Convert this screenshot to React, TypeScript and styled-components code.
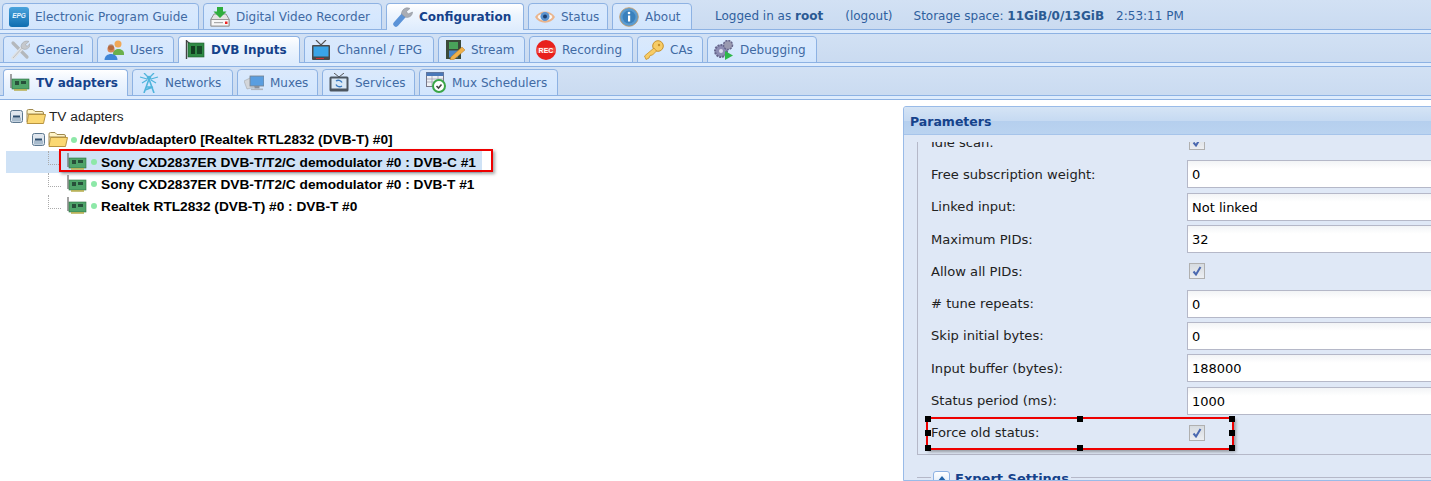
import React from 'react';
import styled, { createGlobalStyle } from 'styled-components';

const GlobalStyle = createGlobalStyle`
  html, body { margin: 0; padding: 0; background: #fff; }
  body { width: 1431px; height: 481px; overflow: hidden; font-family: "DejaVu Sans", sans-serif; }
`;

// Icons
const EpgIcon = () => (
  <svg width="20" height="20" viewBox="0 0 20 20">
    <defs><linearGradient id="epg" x1="0" y1="0" x2="0" y2="1"><stop offset="0" stopColor="#4aa3dc" /><stop offset="1" stopColor="#0f6db0" /></linearGradient></defs>
    <rect width="20" height="20" rx="3" fill="url(#epg)" />
    <text x="10" y="11" textAnchor="middle" fontSize="6.5" fontWeight="700" fontStyle="italic" fill="#e8f4ff" fontFamily="Liberation Sans">EPG</text>
  </svg>
);
const DvrIcon = () => (
  <svg width="20" height="20" viewBox="0 0 20 20">
    <path d="M1 12 L4 7 H16 L19 12 V19 H1 Z" fill="#e4e4e4" stroke="#8d8d8d" />
    <rect x="1" y="12.5" width="18" height="6.5" fill="#f7f7f7" stroke="#9a9a9a" />
    <rect x="4" y="15" width="9" height="1.2" fill="#aaa" />
    <rect x="15" y="14.5" width="2.5" height="2.5" fill="#e22" />
    <path d="M7 0 H13 V4.5 H16.5 L10 11 L3.5 4.5 H7 Z" fill="#2fae3d" />
  </svg>
);
const WrenchIcon = () => (
  <svg width="20" height="20" viewBox="0 0 20 20">
    <path d="M3 17 L11 8" stroke="#5b93d8" strokeWidth="5.5" strokeLinecap="round" />
    <path d="M8.5 7 C8.5 2.5 13 -0.5 17 1.5 L13.5 4.5 L15 7 L19.5 5 C19.5 9 15.5 11.5 12 10 Z" fill="#a9adb5" stroke="#858a93" strokeWidth="0.5" />
  </svg>
);
const EyeIcon = () => (
  <svg width="20" height="20" viewBox="0 0 20 20">
    <path d="M0 10 C4 2.5 16 2.5 20 10 C16 17.5 4 17.5 0 10 Z" fill="#eab48c" />
    <path d="M2.5 10 C6 5 14 5 17.5 10 C14 15 6 15 2.5 10 Z" fill="#f8f8f8" />
    <circle cx="10" cy="9.5" r="4.5" fill="#5a93d0" />
    <circle cx="10" cy="9.5" r="2" fill="#1d3f70" />
  </svg>
);
const AboutIcon = () => (
  <svg width="20" height="20" viewBox="0 0 20 20">
    <circle cx="10" cy="10" r="9.3" fill="#5a9bd0" stroke="#c7955a" strokeWidth="0.8" />
    <circle cx="10" cy="10" r="6.5" fill="#3a80bc" />
    <rect x="9" y="8.5" width="2.2" height="6" fill="#fff" />
    <circle cx="10" cy="6" r="1.3" fill="#fff" />
  </svg>
);
const ToolsIcon = () => (
  <svg width="20" height="20" viewBox="0 0 20 20">
    <path d="M3 3 L17 17" stroke="#b4b8bc" strokeWidth="3.2" strokeLinecap="round" />
    <path d="M3 18 L13 7" stroke="#dfe2e5" strokeWidth="3.4" strokeLinecap="round" />
    <path d="M3 18 L13 7" stroke="#a4a8ac" strokeWidth="0.6" />
    <path d="M11 7 C11 2.5 15.5 0 19 1.5 L15.5 4.5 L17 6.5 L20 3.5 C20.5 8 16 10.5 13 9 Z" fill="#c5c8cc" stroke="#989ca0" strokeWidth="0.5" />
  </svg>
);
const UsersIcon = () => (
  <svg width="20" height="20" viewBox="0 0 20 20">
    <circle cx="14" cy="4" r="3.5" fill="#f0a858" />
    <path d="M9 13.5 C9 7.5 20 7.5 20 13.5 V15 H9 Z" fill="#6ab04c" />
    <circle cx="7" cy="9" r="3.6" fill="#d8865a" />
    <circle cx="7" cy="7.2" r="3" fill="#a0582c" opacity="0.6" />
    <path d="M0.5 20 C0.5 12 13.5 12 13.5 20 Z" fill="#3f86d8" />
  </svg>
);
const CardIcon = () => (
  <svg width="20" height="18" viewBox="0 0 20 18">
    <path d="M1 0 V14" stroke="#7a7a7a" strokeWidth="1.4" />
    <rect x="2" y="5" width="17" height="10" fill="#4fa46a" stroke="#2c6e40" strokeWidth="0.6" />
    <rect x="5" y="7" width="4" height="4" fill="#28503a" />
    <rect x="11" y="7" width="5" height="3" fill="#26503a" />
    <rect x="4" y="15" width="13" height="1.8" fill="#b9b25a" />
  </svg>
);
const DvbIcon = () => (
  <svg width="20" height="20" viewBox="0 0 20 20">
    <path d="M1.5 0 V19" stroke="#444" strokeWidth="1.4" />
    <path d="M1.5 1 L5 3.5" stroke="#444" strokeWidth="1.2" />
    <rect x="3" y="3" width="16" height="14" fill="#2f8a45" stroke="#1d5a2c" strokeWidth="0.6" />
    <rect x="6" y="6" width="4" height="8" fill="#123d20" />
    <rect x="12" y="6" width="5" height="8" fill="#164a28" />
  </svg>
);
const TvIcon = () => (
  <svg width="20" height="20" viewBox="0 0 20 20">
    <path d="M5 0 L10 5 L15 0" stroke="#555" fill="none" strokeWidth="1.2" />
    <rect x="1" y="5" width="18" height="15" rx="1" fill="#4a4a4a" />
    <rect x="2.5" y="6.5" width="15" height="10" fill="#3aa5e8" />
    <rect x="5" y="18" width="8" height="1" fill="#c33" />
  </svg>
);
const StreamIcon = () => (
  <svg width="20" height="20" viewBox="0 0 20 20">
    <rect x="1" y="0" width="15" height="19" fill="#3a4a3a" />
    <rect x="4" y="2" width="9" height="7" fill="#49a35a" />
    <rect x="4" y="10.5" width="9" height="7" fill="#4a86c8" />
    <path d="M6 17 L17 7 L20 10 L9 19.5 L5 20 Z" fill="#eeb04a" stroke="#b87a20" strokeWidth="0.5" />
  </svg>
);
const RecIcon = () => (
  <svg width="20" height="20" viewBox="0 0 20 20">
    <circle cx="10" cy="10" r="10" fill="#e8201c" />
    <rect y="7.5" width="20" height="5.5" fill="#f36a60" opacity="0.55" />
    <text x="10" y="12.5" textAnchor="middle" fontSize="7" fontWeight="700" fill="#fff" fontFamily="Liberation Sans">REC</text>
  </svg>
);
const KeyIcon = () => (
  <svg width="20" height="20" viewBox="0 0 20 20">
    <circle cx="14" cy="6" r="5.3" fill="#f7cc66" stroke="#c8902a" />
    <path d="M10 8 L0.5 16 L2 19.5 L5 18 L6 15.5 L8.5 15 L12.5 11 Z" fill="#f7cc66" stroke="#c8902a" strokeWidth="0.8" />
    <circle cx="15" cy="5" r="1.2" fill="#c8902a" />
  </svg>
);
const GearsIcon = () => (
  <svg width="20" height="20" viewBox="0 0 20 20">
    <circle cx="7" cy="11" r="6" fill="#8d8db4" stroke="#66668c" strokeWidth="2" strokeDasharray="2 1" />
    <circle cx="7" cy="11" r="2" fill="#dde" />
    <circle cx="14" cy="5" r="4.5" fill="#9a9ab0" stroke="#66668c" strokeWidth="1.5" strokeDasharray="2 1" />
    <path d="M11 11 L19 15.5 L11 20 Z" fill="#2fb84a" />
  </svg>
);
const TowerIcon = () => (
  <svg width="20" height="20" viewBox="0 0 20 20" fill="none" stroke="#4fb4dc">
    <path d="M10 6 L5 20 M10 6 L15 20 M7 14 H13 M6 17 L14 14" strokeWidth="1.6" />
    <circle cx="10" cy="5" r="1.8" fill="#4fb4dc" />
    <path d="M5 0 L10 5 L15 0 M1 4 L8 6 M19 4 L12 6 M3 10 L8 7 M17 10 L12 7" strokeWidth="1.3" />
  </svg>
);
const MuxIcon = () => (
  <svg width="20" height="20" viewBox="0 0 20 20">
    <path d="M0 8 L8 4 L11 14 L3 16 Z" fill="#d3d6da" stroke="#a5a8ac" strokeWidth="0.6" />
    <rect x="6" y="3" width="14" height="10" fill="#5a9ee0" stroke="#7a8088" strokeWidth="0.8" />
    <rect x="10.5" y="13" width="5" height="2.5" fill="#8a909a" />
    <rect x="7" y="15.5" width="12" height="1.6" fill="#b0b5be" />
  </svg>
);
const ServicesIcon = () => (
  <svg width="20" height="20" viewBox="0 0 20 20">
    <path d="M5 0 L10 4 L15 0" stroke="#555" fill="none" />
    <rect x="0.5" y="3.5" width="19" height="15" rx="1.5" fill="#4c5660" />
    <rect x="2.5" y="5.5" width="15" height="10" fill="#d9e8f5" />
    <path d="M7 8 A4 4 0 0 1 13 9.5 M13 13 A4 4 0 0 1 7 11.5" stroke="#3a7ac0" strokeWidth="1.4" fill="none" />
  </svg>
);
const SchedIcon = () => (
  <svg width="20" height="21" viewBox="0 0 20 21">
    <rect x="0.5" y="0.5" width="17" height="14" fill="#eef0f4" stroke="#778" />
    <rect x="0.5" y="0.5" width="17" height="3.5" fill="#4a78b8" />
    <path d="M1 7 H17 M1 10 H17 M6 4 V14 M12 4 V14" stroke="#99a" strokeWidth="0.7" />
    <circle cx="13" cy="14" r="6" fill="#fff" stroke="#3aa648" strokeWidth="2" />
    <path d="M10.5 14 L12.5 16 L15.5 12.5" stroke="#444" strokeWidth="1.6" fill="none" />
  </svg>
);
const FolderIcon = () => (
  <svg width="20" height="17" viewBox="0 0 20 17">
    <path d="M1 14 V3 Q1 1.5 2.5 1.5 H7 L9 3.5 H16 Q17.5 3.5 17.5 5 V6 H1" fill="#fff4c8" stroke="#a08a50" />
    <path d="M1 15.5 L2.5 6.5 H19.5 L17.5 15.5 Z" fill="#fbd873" stroke="#b89440" />
  </svg>
);
const MinusBox = () => (
  <svg width="13" height="13" viewBox="0 0 13 13">
    <rect x="0.5" y="0.5" width="12" height="12" rx="2" fill="#dfe6ee" stroke="#5d7890" />
    <rect x="2" y="7.5" width="9" height="4" fill="#a9bccd" />
    <rect x="3" y="5.5" width="7" height="2" fill="#2f4f6f" />
  </svg>
);
const CheckMark = () => (
  <svg width="10" height="10" viewBox="0 0 10 10">
    <path d="M1.5 5.5 L4 8.5 L8.5 1" stroke="#4a68b0" strokeWidth="2" fill="none" />
  </svg>
);
const UpArrow = () => (
  <svg width="10" height="7" viewBox="0 0 10 7"><path d="M5 0 L10 6 H0 Z" fill="#2464a8" /></svg>
);

// Tab bars
const Bar = styled.div`
  height: 33px;
  box-sizing: border-box;
  background: linear-gradient(#d2e1f4 0%, #c9daf0 100%);
  position: relative;
`;
const BarTabs = styled.div<{ $first?: boolean; $left: number }>`
  display: flex;
  gap: 4px;
  align-items: flex-end;
  height: 30px;
  box-sizing: border-box;
  padding-left: ${({ $left }) => $left}px;
  border-top: ${({ $first }) => ($first ? '0' : '1px solid #8db2e3')};
  border-bottom: 1px solid #8db2e3;
`;
const BarStrip = styled.div`
  height: 3px;
  background: #deecfd;
`;
const Tab = styled.div<{ $w: number; $active?: boolean }>`
  width: ${({ $w }) => $w}px;
  height: 27px;
  flex: none;
  box-sizing: border-box;
  display: flex;
  align-items: center;
  gap: 6px;
  padding-left: 6px;
  border: 1px solid #8db2e3;
  border-bottom: ${({ $active }) => ($active ? '0' : '1px solid #8db2e3')};
  border-radius: 4px 4px 0 0;
  margin-bottom: -1px;
  background: ${({ $active }) =>
    $active ? 'linear-gradient(#ffffff 0%, #eef5fe 40%, #deecfd 100%)' : 'linear-gradient(#dbe9fb 0%, #d6e8fe 50%, #d2e5fc 100%)'};
  color: ${({ $active }) => ($active ? '#15428b' : '#416aa3')};
  font-weight: ${({ $active }) => ($active ? 700 : 400)};
  font-size: 12px;
  white-space: nowrap;
  position: relative;
  z-index: ${({ $active }) => ($active ? 1 : 0)};
`;
const StatusArea = styled.div`
  display: flex;
  align-items: center;
  height: 27px;
  margin-left: 19px;
  font-size: 12px;
  color: #2f5f9e;
  white-space: nowrap;
`;
const StatusItem = styled.span<{ $gap: number }>`
  margin-right: ${({ $gap }) => $gap}px;
  b { color: #2b5a93; }
`;
const EndLine = styled.div`
  height: 1px;
  background: #8db2e3;
`;

// Main area
const Main = styled.div`
  display: flex;
  height: 381px;
  overflow: hidden;
`;
const TreePane = styled.div`
  width: 903px;
  flex: none;
  padding-top: 5px;
  box-sizing: border-box;
  font-family: "Liberation Sans", Arial, sans-serif;
  color: #111;
`;
const TreeRow = styled.div<{ $indent: number; $selected?: boolean; $height: number; $gap: number }>`
  display: flex;
  align-items: center;
  gap: ${({ $gap }) => $gap}px;
  height: ${({ $height }) => $height}px;
  margin-left: 6px;
  width: 476px;
  box-sizing: border-box;
  padding-left: ${({ $indent }) => $indent}px;
  background: ${({ $selected }) => ($selected ? '#cfe2f6' : 'transparent')};
  white-space: nowrap;
  position: relative;
`;
const Dot = styled.span`
  width: 6px;
  height: 6px;
  border-radius: 50%;
  background: #8de8a8;
  flex: none;
`;
const RowLabel = styled.span<{ $bold?: boolean }>`
  font-weight: ${({ $bold }) => ($bold ? 700 : 400)};
  font-size: 13.7px;
  color: ${({ $bold }) => ($bold ? '#000' : '#222')};
`;
const Connector = styled.span`
  position: absolute;
  left: 42px;
  top: 0;
  bottom: 8px;
  width: 12px;
  border-left: 1px dotted #aaa;
  border-bottom: 1px dotted #aaa;
`;
const RedFrame = styled.div`
  position: absolute;
  left: 53px;
  top: -2px;
  width: 434px;
  height: 23px;
  box-sizing: border-box;
  border: 2px solid #ee0000;
  box-shadow: 2px 2px 3px rgba(60, 60, 60, 0.45);
  pointer-events: none;
`;

// Parameters panel
const Panel = styled.div`
  width: 600px;
  flex: none;
  margin-top: 6px;
  border: 1px solid #99bbe8;
  border-radius: 3px 0 0 0;
  background: #dfe8f6;
  overflow: hidden;
`;
const PanelHeader = styled.div`
  height: 28px;
  box-sizing: border-box;
  padding: 7px 0 0 6px;
  background: linear-gradient(#d5e4f5 0%, #c6daf2 50%, #b5cfee 52%, #bad3f0 100%);
  border-bottom: 1px solid #a6c4ea;
  color: #15428b;
  font-weight: 700;
  font-size: 12.5px;
  line-height: 16px;
`;
const PanelBody = styled.div`
  margin-top: 7px;
  padding-left: 13px;
  height: 400px;
  overflow: hidden;
`;
const FieldGroup = styled.div`
  margin-top: -16px;
  width: 560px;
  box-sizing: border-box;
  border: 1px solid #b5b8c8;
  border-top: 0;
  padding: 0 0 5px 13px;
`;
const FormRow = styled.div`
  height: 32.3px;
  display: flex;
  align-items: center;
  font-size: 13.1px;
  color: #222;
  position: relative;
`;
const FieldLabel = styled.label`
  width: 256px;
  flex: none;
`;
const Input = styled.div`
  width: 290px;
  height: 28px;
  box-sizing: border-box;
  border: 1px solid #b5b8c8;
  background: linear-gradient(#f2f4f6 0%, #ffffff 30%);
  padding: 6px 0 0 4px;
  line-height: 16px;
  color: #000;
  font-size: 13px;
`;
const Check = styled.span`
  width: 16px;
  height: 16px;
  box-sizing: border-box;
  margin-left: 2px;
  border: 1px solid #b0b0b0;
  background: linear-gradient(#d6dbe0, #eceef2);
  display: flex;
  align-items: center;
  justify-content: center;
`;
const SelectFrame = styled.div`
  position: absolute;
  left: -5px;
  top: 0;
  width: 308px;
  height: 33px;
  box-sizing: border-box;
  border: 2px solid #ee0000;
  box-shadow: 2px 2px 3px rgba(60, 60, 60, 0.45);
  pointer-events: none;
`;
const Handle = styled.i<{ $x: string; $y: string }>`
  position: absolute;
  width: 6px;
  height: 6px;
  background: #000;
  left: calc(${({ $x }) => $x} - 3px);
  top: calc(${({ $y }) => $y} - 3px);
`;
const CollapsedGroup = styled.div`
  margin-top: 22px;
  width: 560px;
  border-top: 1px solid #b5b8c8;
  position: relative;
  height: 20px;
`;
const GroupLegend = styled.div`
  position: absolute;
  left: 14px;
  top: -7px;
  padding: 0 2px;
  display: flex;
  align-items: flex-start;
  gap: 5px;
  background: #dfe8f6;
  color: #15428b;
  font-size: 13px;
  font-weight: 700;
  line-height: 16px;
`;
const ToggleButton = styled.span`
  width: 17px;
  height: 17px;
  box-sizing: border-box;
  border: 1px solid #8db2e3;
  border-radius: 3px;
  background: linear-gradient(#ffffff, #d5e5f8);
  display: flex;
  align-items: center;
  justify-content: center;
`;
const Cursor = styled.svg`
  position: absolute;
  left: 0;
  top: 0;
`;

const topTabs = [
  { label: 'Electronic Program Guide', w: 197, icon: <EpgIcon /> },
  { label: 'Digital Video Recorder', w: 179, icon: <DvrIcon /> },
  { label: 'Configuration', w: 138, icon: <WrenchIcon />, active: true },
  { label: 'Status', w: 80, icon: <EyeIcon /> },
  { label: 'About', w: 80, icon: <AboutIcon /> },
];
const midTabs = [
  { label: 'General', w: 90, icon: <ToolsIcon /> },
  { label: 'Users', w: 77, icon: <UsersIcon /> },
  { label: 'DVB Inputs', w: 122, icon: <DvbIcon />, active: true },
  { label: 'Channel / EPG', w: 130, icon: <TvIcon /> },
  { label: 'Stream', w: 87, icon: <StreamIcon /> },
  { label: 'Recording', w: 104, icon: <RecIcon /> },
  { label: 'CAs', w: 66, icon: <KeyIcon /> },
  { label: 'Debugging', w: 110, icon: <GearsIcon /> },
];
const subTabs = [
  { label: 'TV adapters', w: 125, icon: <CardIcon />, active: true },
  { label: 'Networks', w: 101, icon: <TowerIcon /> },
  { label: 'Muxes', w: 81, icon: <MuxIcon /> },
  { label: 'Services', w: 93, icon: <ServicesIcon /> },
  { label: 'Mux Schedulers', w: 139, icon: <SchedIcon /> },
];
const fields: { label: string; value?: string; checked?: boolean }[] = [
  { label: 'Idle scan:', checked: true },
  { label: 'Free subscription weight:', value: '0' },
  { label: 'Linked input:', value: 'Not linked' },
  { label: 'Maximum PIDs:', value: '32' },
  { label: 'Allow all PIDs:', checked: true },
  { label: '# tune repeats:', value: '0' },
  { label: 'Skip initial bytes:', value: '0' },
  { label: 'Input buffer (bytes):', value: '188000' },
  { label: 'Status period (ms):', value: '1000' },
  { label: 'Force old status:', checked: true },
];
const handles = [
  ['0%', '0%'], ['50%', '0%'], ['100%', '0%'],
  ['0%', '50%'], ['100%', '50%'],
  ['0%', '100%'], ['50%', '100%'], ['100%', '100%'],
];

const TabList = ({ tabs }: { tabs: typeof midTabs }) => (
  <>
    {tabs.map((t) => (
      <Tab key={t.label} $w={t.w} $active={t.active}>
        {t.icon}
        {t.label}
      </Tab>
    ))}
  </>
);

export default function App() {
  return (
    <>
      <GlobalStyle />
      <Cursor width="6" height="6" viewBox="0 0 6 6"><path d="M0 0 L5 5" stroke="#333" strokeWidth="1.5" /></Cursor>
      <Bar>
        <BarTabs $first $left={2}>
          <TabList tabs={topTabs} />
          <StatusArea>
            <StatusItem $gap={22}>Logged in as <b>root</b></StatusItem>
            <StatusItem $gap={21}>(logout)</StatusItem>
            <StatusItem $gap={12}>Storage space: <b>11GiB/0/13GiB</b></StatusItem>
            <StatusItem $gap={0}>2:53:11 PM</StatusItem>
          </StatusArea>
        </BarTabs>
        <BarStrip />
      </Bar>
      <Bar>
        <BarTabs $left={3}><TabList tabs={midTabs} /></BarTabs>
        <BarStrip />
      </Bar>
      <Bar>
        <BarTabs $left={3}><TabList tabs={subTabs} /></BarTabs>
        <BarStrip />
      </Bar>
      <EndLine />
      <Main>
        <TreePane>
          <TreeRow $indent={4} $height={23} $gap={3}>
            <MinusBox /><FolderIcon /><RowLabel>TV adapters</RowLabel>
          </TreeRow>
          <TreeRow $indent={26} $height={23} $gap={3}>
            <MinusBox /><FolderIcon /><Dot /><RowLabel $bold>/dev/dvb/adapter0 [Realtek RTL2832 (DVB-T) #0]</RowLabel>
          </TreeRow>
          <TreeRow $indent={61} $height={22} $gap={4} $selected>
            <Connector />
            <CardIcon /><Dot /><RowLabel $bold>Sony CXD2837ER DVB-T/T2/C demodulator #0 : DVB-C #1</RowLabel>
            <RedFrame />
          </TreeRow>
          <TreeRow $indent={61} $height={22} $gap={4}>
            <Connector />
            <CardIcon /><Dot /><RowLabel $bold>Sony CXD2837ER DVB-T/T2/C demodulator #0 : DVB-T #1</RowLabel>
          </TreeRow>
          <TreeRow $indent={61} $height={22} $gap={4}>
            <Connector />
            <CardIcon /><Dot /><RowLabel $bold>Realtek RTL2832 (DVB-T) #0 : DVB-T #0</RowLabel>
          </TreeRow>
        </TreePane>
        <Panel>
          <PanelHeader>Parameters</PanelHeader>
          <PanelBody>
            <FieldGroup>
              {fields.map((f) => (
                <FormRow key={f.label}>
                  <FieldLabel>{f.label}</FieldLabel>
                  {f.checked ? <Check><CheckMark /></Check> : <Input>{f.value}</Input>}
                  {f.label === 'Force old status:' && (
                    <SelectFrame>
                      {handles.map(([x, y]) => <Handle key={x + y} $x={x} $y={y} />)}
                    </SelectFrame>
                  )}
                </FormRow>
              ))}
            </FieldGroup>
            <CollapsedGroup>
              <GroupLegend>
                <ToggleButton><UpArrow /></ToggleButton>
                Expert Settings
              </GroupLegend>
            </CollapsedGroup>
          </PanelBody>
        </Panel>
      </Main>
    </>
  );
}
